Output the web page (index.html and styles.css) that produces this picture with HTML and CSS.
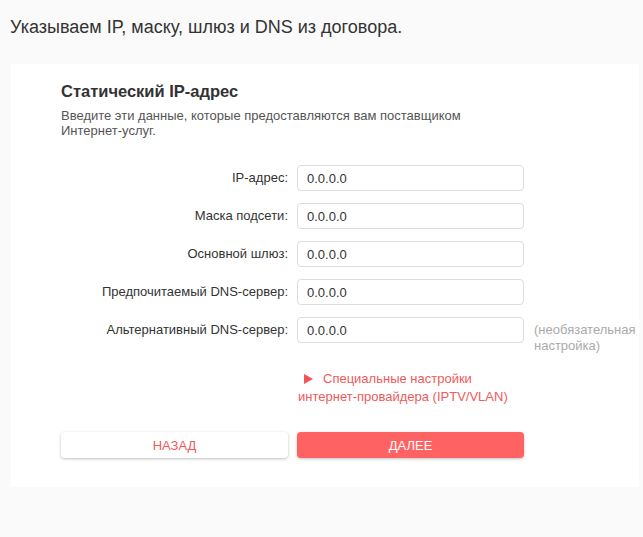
FILE: index.html
```html
<!DOCTYPE html>
<html lang="ru">
<head>
    <meta charset="UTF-8">
    <title>Статический IP-адрес</title>
    <link rel="stylesheet" href="styles.css">
</head>
<body>

    <p class="intro">Указываем IP, маску, шлюз и DNS из договора.</p>

    <div class="card">
        <h2>Статический IP-адрес</h2>
        <p class="desc">Введите эти данные, которые предоставляются вам поставщиком<br>Интернет-услуг.</p>

        <div class="form">
            <label>IP-адрес:</label>
            <input type="text" value="0.0.0.0">
            <span></span>

            <label>Маска подсети:</label>
            <input type="text" value="0.0.0.0">
            <span></span>

            <label>Основной шлюз:</label>
            <input type="text" value="0.0.0.0">
            <span></span>

            <label>Предпочитаемый DNS-сервер:</label>
            <input type="text" value="0.0.0.0">
            <span></span>

            <label>Альтернативный DNS-сервер:</label>
            <input type="text" value="0.0.0.0">
            <span class="hint">(необязательная настройка)</span>

            <span></span>
            <a class="isp-link" href="#"><span class="arrow"></span>Специальные настройки интернет-провайдера (IPTV/VLAN)</a>
            <span></span>

            <button class="btn back">НАЗАД</button>
            <button class="btn next">ДАЛЕЕ</button>
        </div>
    </div>

</body>
</html>
```

FILE: styles.css
```css
body {
    margin: 0;
    background: #fafafa;
    font-family: "Liberation Sans", Arial, sans-serif;
    color: #333;
}
.intro {
    margin: 0;
    padding: 17px 10px 0;
    font-size: 18px;
    line-height: 21px;
}
.card {
    background: #fff;
    margin: 26px 4px 0 11px;
    padding: 17px 50px 28px;
    height: 378px;
}
.card h2 {
    margin: 0;
    font-size: 16.5px;
    line-height: 20px;
    font-weight: bold;
    color: #333;
}
.desc {
    margin: 7px 0 0;
    font-size: 13px;
    line-height: 15px;
    color: #555;
}
.form {
    display: grid;
    grid-template-columns: 227px 227px 110px;
    column-gap: 9px;
    row-gap: 12px;
    margin-top: 27px;
    align-items: start;
}
.form label {
    text-align: right;
    font-size: 13px;
    line-height: 26px;
    color: #333;
}
.form input {
    box-sizing: border-box;
    height: 26px;
    width: 100%;
    margin: 0;
    border: 1px solid #ddd;
    border-radius: 4px;
    padding: 0 9px;
    font-family: inherit;
    font-size: 13px;
    color: #333;
}
.hint {
    font-size: 13px;
    line-height: 16px;
    color: #aaa;
    padding-top: 5px;
    margin-left: 1px;
}
.isp-link {
    color: #f05a5a;
    text-decoration: none;
    font-size: 13px;
    line-height: 18px;
    margin-top: 4px;
    padding-left: 1px;
    padding-right: 10px;
}
.arrow {
    display: inline-block;
    width: 0;
    height: 0;
    border-top: 5px solid transparent;
    border-bottom: 5px solid transparent;
    border-left: 9px solid #f25555;
    margin: 0 10px 0 6px;
    vertical-align: -1px;
}
.btn {
    height: 26px;
    margin-top: 14px;
    border: none;
    border-radius: 4px;
    font-family: inherit;
    font-size: 13px;
    box-shadow: 0 1px 3px rgba(0, 0, 0, 0.25);
    cursor: pointer;
}
.back {
    background: #fff;
    color: #f05a5a;
}
.next {
    background: #ff6262;
    color: #fff;
}
```
